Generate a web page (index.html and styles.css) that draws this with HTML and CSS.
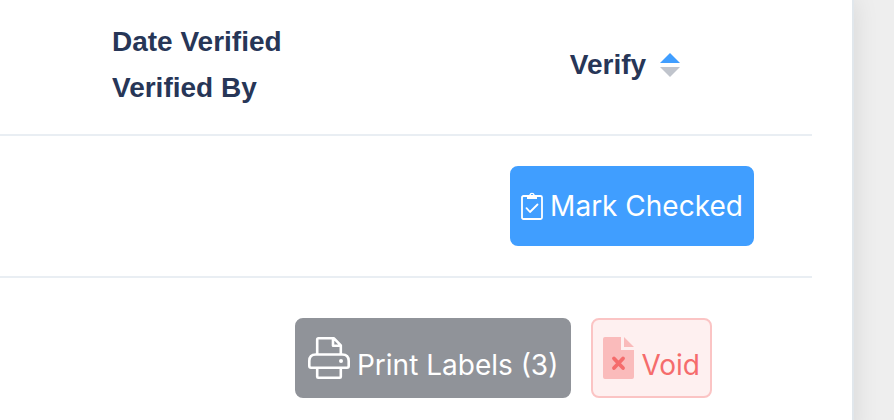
FILE: index.html
```html
<!DOCTYPE html>
<html lang="en">
<head>
<meta charset="utf-8">
<title>Verification</title>
<link rel="stylesheet" href="styles.css">
</head>
<body>
<main class="card">
  <table class="grid">
    <colgroup><col><col class="col-verify"></colgroup>
    <thead>
      <tr>
        <th class="date-head">Date Verified<br>Verified By</th>
        <th class="verify-head" aria-sort="ascending">
          <span class="sort-label">Verify<svg class="caret" width="48" height="28" viewBox="0 0 48 28" aria-hidden="true"><path fill="#409eff" d="M14 12 24 2l10 10z"/><path fill="#c0c4cc" d="M14 16h20L24 26z"/></svg></span>
        </th>
      </tr>
    </thead>
    <tbody>
      <tr>
        <td></td>
        <td class="check-cell">
          <button class="btn primary" type="button">
            <svg width="22" height="28" viewBox="0 0 22 28" fill="none" stroke="#fff" stroke-width="1.8" stroke-linejoin="round" stroke-linecap="round" aria-hidden="true"><rect x="1" y="4" width="20" height="23" rx="1.500"/><path d="m5.500 16.200 3.500 3.800 7.500-7.500"/><path fill="#fff" stroke="none" fill-rule="evenodd" d="M6 7V4.500q0-1.500 1.500-1.500h.7a2.900 2.900 0 0 1 5.600 0h.7Q16 3 16 4.500V7zM11 2a1.300 1.300 0 1 0 0 2.600A1.300 1.300 0 0 0 11 2z"/></svg>
            <span>Mark Checked</span>
          </button>
        </td>
      </tr>
      <tr>
        <td class="actions-cell" colspan="2">
          <div class="actions">
            <button class="btn info" type="button">
              <svg width="42" height="42" viewBox="0 0 42 42" fill="none" stroke="#fff" stroke-width="2.600" stroke-linejoin="round" aria-hidden="true"><path d="M9.200 17V2.500q0-1.200 1.200-1.200H26l6.800 7V17M25 1.300v7.400h7.800"/><path d="M9 30.700H3q-1.700 0-1.700-1.700v-5q0-6.500 6.500-6.500h26.400q6.500 0 6.500 6.500v5q0 1.700-1.700 1.700H3"/><path d="M9.200 30.700v9q0 1 1 1h21.600q1 0 1-1v-9"/><circle cx="33" cy="24" r="2" fill="#fff" stroke="none"/></svg>
              <span>Print Labels (3)</span>
            </button>
            <button class="btn danger" type="button">
              <svg width="31" height="42" viewBox="0 0 31 42" aria-hidden="true"><path fill="#fabbbb" d="M2 0h16v13h13v27q0 2-2 2H2q-2 0-2-2V2q0-2 2-2zM21 0l10 10H21z"/><path fill="none" stroke="#f56c6c" stroke-width="3.800" stroke-linecap="round" d="m11 21.500 9 9.500m0-9.500L11 31"/></svg>
              <span>Void</span>
            </button>
          </div>
        </td>
      </tr>
    </tbody>
  </table>
</main>
</body>
</html>
```
FILE: styles.css
```css
* {
  box-sizing: border-box;
}

body {
  margin: 0;
  background: #eee;
  overflow: hidden;
}

.card {
  min-height: 100vh;
  margin-right: 40px;
  padding-right: 40px;
  background: #fff;
  border-right: 2px solid #e1e7ec;
  box-shadow: 0 0 24px rgba(0, 0, 0, 0.1);
}

.grid {
  width: 100%;
  border-collapse: separate;
  border-spacing: 0;
  table-layout: fixed;
}

.col-verify {
  width: 360px;
}

th,
td {
  padding: 0;
  border-bottom: 2px solid #e9eef3;
}

th {
  color: #273657;
  font: bold 28px/46px "Liberation Sans", Arial, sans-serif;
}

.date-head {
  padding: 19px 0 23px 112px;
  text-align: left;
}

.verify-head {
  padding-bottom: 4px;
}

.sort-label {
  display: flex;
  align-items: center;
  justify-content: center;
}

.check-cell {
  padding: 30px 0;
}

.actions-cell {
  padding: 40px 100px 40px 0;
  border-bottom: 0;
}

.actions {
  display: flex;
  justify-content: flex-end;
  gap: 20px;
}

.btn {
  display: flex;
  align-items: flex-end;
  gap: 7px;
  margin: 0;
  padding: 17px 10px;
  border: 2px solid;
  border-radius: 8px;
  font: 28px/28px Inter, sans-serif;
  white-space: nowrap;
}

.primary {
  margin: 0 auto;
  padding: 24px 9px;
  color: #fff;
  background: #409eff;
  border-color: #409eff;
}

.info {
  padding: 17px 11px;
  color: #fff;
  background: #909399;
  border-color: #909399;
}

.danger {
  color: #f56c6c;
  background: #fef0f0;
  border-color: #fbc4c4;
}
```
